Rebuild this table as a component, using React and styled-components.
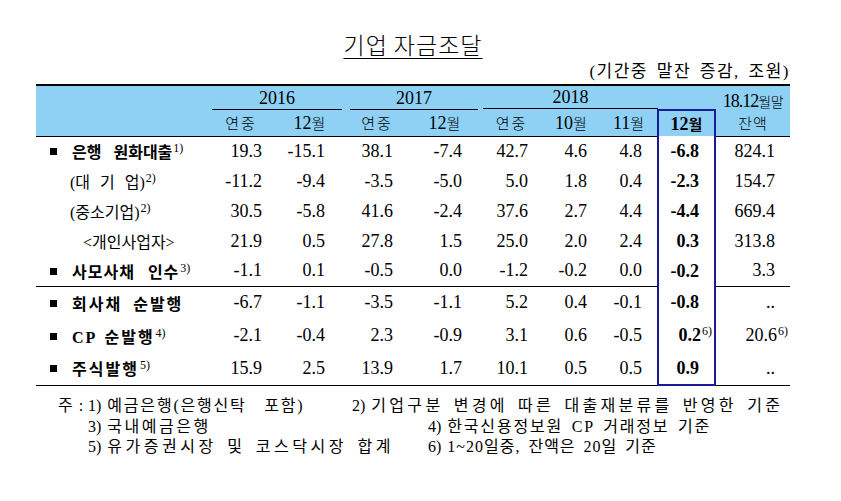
import React from 'react';
import styled, { createGlobalStyle } from 'styled-components';

const GlobalStyle = createGlobalStyle`
  html, body { margin: 0; padding: 0; background: #ffffff; }
  body {
    font-family: "Liberation Serif", "Noto Sans CJK KR", serif;
    color: #000000;
  }
`;

const BLUE = '#8fd0f5';
const NAVY = '#1b1b98';

const Page = styled.div`
  width: 841px;
  height: 501px;
  box-sizing: border-box;
  padding: 30px 0 0 36px;
  overflow: hidden;
`;

const Sheet = styled.div`
  width: 754px;
  display: flex;
  flex-direction: column;
`;

const Title = styled.h1`
  margin: 0;
  text-align: center;
  font-family: "Noto Sans CJK KR", sans-serif;
  font-size: 23px;
  line-height: 28px;
  font-weight: 300;
  letter-spacing: 1px;
`;

const TitleText = styled.span`
  text-decoration: underline;
  text-decoration-thickness: 1px;
  text-underline-offset: 4px;
`;

const Unit = styled.div`
  margin: 4px 0 2px;
  text-align: right;
  font-family: "Liberation Serif", "Noto Sans CJK KR", serif;
  font-size: 17px;
  line-height: 20px;
  letter-spacing: 1.5px;
  word-spacing: 3px;
`;

const Table = styled.table`
  width: 754px;
  border-collapse: collapse;
  table-layout: fixed;
  font-size: 18px;
`;

const HeadRow = styled.tr`
  height: ${p => p.$h}px;
`;

const HeadCell = styled.th`
  background: ${BLUE};
  padding: ${p => p.$padTop || 0}px 0 0;
  text-align: center;
  vertical-align: ${p => p.$valign || 'middle'};
  font-weight: ${p => (p.$bold ? 700 : 400)};
  line-height: 21px;
  border-top: ${p => (p.$top ? '2px solid #000' : p.$boxTop ? `2px solid ${NAVY}` : 'none')};
  border-bottom: ${p => (p.$bottom ? '1px solid #000' : 'none')};
  border-left: ${p => (p.$box ? `2px solid ${NAVY}` : 'none')};
  border-right: ${p => (p.$box ? `2px solid ${NAVY}` : 'none')};
`;

const YearLabel = styled.div`
  margin: 0 ${p => p.$mr}px 0 ${p => p.$ml}px;
  border-bottom: 1px solid #000;
  line-height: 22px;
  font-weight: 400;
`;

const BalanceLine = styled.div`
  letter-spacing: ${p => p.$ls}px;
  white-space: nowrap;
`;

const Ko = styled.span`
  font-family: "Noto Sans CJK KR", sans-serif;
  font-size: ${p => p.$size || 15}px;
  font-weight: ${p => (p.$bold ? 700 : 300)};
  letter-spacing: ${p => p.$ls || 0}px;
`;

const BodyRow = styled.tr`
  height: ${p => p.$h}px;
`;

const LabelCell = styled.td`
  padding: 0 0 0 ${p => p.$indent}px;
  white-space: nowrap;
  font-family: "Liberation Serif", "Noto Sans CJK KR", serif;
  font-size: 16px;
  font-weight: ${p => (p.$main ? 700 : 400)};
  letter-spacing: ${p => p.$ls}px;
  word-spacing: ${p => p.$ws}px;
  border-top: ${p => (p.$sepTop ? '1px solid #000' : 'none')};
  border-bottom: ${p => (p.$sepBottom ? '1px solid #000' : 'none')};
`;

const Bullet = styled.span`
  display: inline-block;
  width: 7px;
  height: 7px;
  background: #000;
  margin-right: 15px;
  vertical-align: 3px;
`;

const NumCell = styled.td`
  padding: 0 ${p => p.$pad}px 0 0;
  text-align: right;
  white-space: nowrap;
  font-weight: ${p => (p.$bold ? 700 : 400)};
  border-top: ${p => (p.$sepTop && !p.$box ? '1px solid #000' : 'none')};
  border-bottom: ${p => (p.$sepBottom ? (p.$box ? `2px solid ${NAVY}` : '1px solid #000') : 'none')};
  border-left: ${p => (p.$box ? `2px solid ${NAVY}` : 'none')};
  border-right: ${p => (p.$box ? `2px solid ${NAVY}` : 'none')};
`;

const Sup = styled.sup`
  font-family: "Liberation Serif", serif;
  font-size: 12px;
  font-weight: 400;
  line-height: 0;
  vertical-align: 6px;
  letter-spacing: 0;
  word-spacing: 0;
  margin-left: 1px;
  margin-right: ${p => (p.$hang ? -13 : 0)}px;
`;

const Notes = styled.div`
  margin-top: 10px;
  padding-left: 22px;
  display: flex;
  flex-direction: column;
  font-family: "Liberation Serif", "Noto Sans CJK KR", serif;
  font-size: 16px;
  line-height: 20.5px;
`;

const NoteRow = styled.div`
  display: flex;
  white-space: nowrap;
`;

const NoteLead = styled.span`
  width: 30px;
  flex: none;
  word-spacing: 2px;
`;

const NoteItem = styled.span`
  width: ${p => (p.$w ? `${p.$w}px` : 'auto')};
  flex: none;
  letter-spacing: ${p => p.$ls}px;
  word-spacing: ${p => p.$ws}px;
`;

const NoteNum = styled.span`
  letter-spacing: 0;
  margin-right: 6px;
`;

const colWidths = [173, 64, 73, 62, 73, 61, 58, 58, 57, 75];
const pads = [11, 21, 15, 19, 14, 13, 15, 15, 15];

const rows = [
  { label: '은행 원화대출', note: '1)', main: true, ls: 0, ws: 8, values: ['19.3', '-15.1', '38.1', '-7.4', '42.7', '4.6', '4.8', '-6.8', '824.1'] },
  { label: '(대 기 업)', note: '2)', indent: 34, ws: 6, values: ['-11.2', '-9.4', '-3.5', '-5.0', '5.0', '1.8', '0.4', '-2.3', '154.7'] },
  { label: '(중소기업)', note: '2)', indent: 34, values: ['30.5', '-5.8', '41.6', '-2.4', '37.6', '2.7', '4.4', '-4.4', '669.4'] },
  { label: '<개인사업자>', indent: 47, values: ['21.9', '0.5', '27.8', '1.5', '25.0', '2.0', '2.4', '0.3', '313.8'] },
  { label: '사모사채 인수', note: '3)', main: true, ls: 1, ws: 8, values: ['-1.1', '0.1', '-0.5', '0.0', '-1.2', '-0.2', '0.0', '-0.2', '3.3'] },
  { label: '회사채 순발행', main: true, ls: 2, ws: 5, sepTop: true, values: ['-6.7', '-1.1', '-3.5', '-1.1', '5.2', '0.4', '-0.1', '-0.8', '..'] },
  { label: 'CP 순발행', note: '4)', main: true, ls: 2, ws: 2, values: ['-2.1', '-0.4', '2.3', '-0.9', '3.1', '0.6', '-0.5', { v: '0.2', note: '6)' }, { v: '20.6', note: '6)' }] },
  { label: '주식발행', note: '5)', main: true, ls: 2, ws: 0, sepBottom: true, values: ['15.9', '2.5', '13.9', '1.7', '10.1', '0.5', '0.5', '0.9', '..'] },
];

const notes = [
  {
    lead: '주 :',
    left: { n: '1)', t: '예금은행(은행신탁\u00a0 포함)', w: 264, ls: 1.8 },
    right: { n: '2)', t: '기업구분 변경에 따른 대출재분류를 반영한 기준', ls: 3.3 },
  },
  {
    lead: '',
    left: { n: '3)', t: '국내예금은행', w: 340, ls: 2.5 },
    right: { n: '4)', t: '한국신용정보원 CP 거래정보 기준', ls: 1.8 },
  },
  {
    lead: '',
    left: { n: '5)', t: '유가증권시장 및 코스닥시장 합계', w: 340, ls: 3.5 },
    right: { n: '6)', t: '1~20일중, 잔액은 20일 기준', ls: 1 },
  },
];

function App() {
  return (
    <Page>
      <GlobalStyle />
      <Sheet>
        <Title>
          <TitleText>기업 자금조달</TitleText>
        </Title>
        <Unit>(기간중 말잔 증감, 조원)</Unit>
        <Table>
          <colgroup>
            {colWidths.map((w, i) => (
              <col key={i} style={{ width: w }} />
            ))}
          </colgroup>
          <thead>
            <HeadRow $h={24}>
              <HeadCell rowSpan={2} $top $bottom />
              <HeadCell colSpan={2} $top $valign="bottom">
                <YearLabel $ml={3} $mr={4}>2016</YearLabel>
              </HeadCell>
              <HeadCell colSpan={2} $top $valign="bottom">
                <YearLabel $ml={4} $mr={3}>2017</YearLabel>
              </HeadCell>
              <HeadCell colSpan={4} $top $valign="bottom">
                <YearLabel $ml={2} $mr={57}>2018</YearLabel>
              </HeadCell>
              <HeadCell rowSpan={2} $top $bottom $padTop={4}>
                <BalanceLine $ls={-1}>
                  18.12<Ko $size={14} $ls={-0.5}>월말</Ko>
                </BalanceLine>
                <BalanceLine $ls={0}>
                  <Ko $size={15} $ls={1}>잔액</Ko>
                </BalanceLine>
              </HeadCell>
            </HeadRow>
            <HeadRow $h={26}>
              <HeadCell $bottom><Ko $ls={2}>연중</Ko></HeadCell>
              <HeadCell $bottom>12<Ko>월</Ko></HeadCell>
              <HeadCell $bottom><Ko $ls={2}>연중</Ko></HeadCell>
              <HeadCell $bottom>12<Ko>월</Ko></HeadCell>
              <HeadCell $bottom><Ko $ls={2}>연중</Ko></HeadCell>
              <HeadCell $bottom>10<Ko>월</Ko></HeadCell>
              <HeadCell $bottom>11<Ko>월</Ko></HeadCell>
              <HeadCell $box $boxTop $bold>12<Ko $bold>월</Ko></HeadCell>
            </HeadRow>
          </thead>
          <tbody>
            {rows.map((r, ri) => (
              <BodyRow key={ri} $h={ri < 5 ? 30 : 33}>
                <LabelCell
                  $main={r.main}
                  $indent={r.main ? 14 : r.indent}
                  $ls={r.ls || 0}
                  $ws={r.ws || 0}
                  $sepTop={r.sepTop}
                  $sepBottom={r.sepBottom}
                >
                  {r.main && <Bullet />}
                  {r.label}
                  {r.note && <Sup>{r.note}</Sup>}
                </LabelCell>
                {r.values.map((val, ci) => {
                  const cell = typeof val === 'string' ? { v: val } : val;
                  return (
                    <NumCell
                      key={ci}
                      $pad={pads[ci]}
                      $bold={ci === 7}
                      $box={ci === 7}
                      $sepTop={r.sepTop}
                      $sepBottom={r.sepBottom}
                    >
                      {cell.v}
                      {cell.note && <Sup $hang>{cell.note}</Sup>}
                    </NumCell>
                  );
                })}
              </BodyRow>
            ))}
          </tbody>
        </Table>
        <Notes>
          {notes.map((n, i) => (
            <NoteRow key={i}>
              <NoteLead>{n.lead}</NoteLead>
              <NoteItem $w={n.left.w} $ls={n.left.ls} $ws={3}>
                <NoteNum>{n.left.n}</NoteNum>
                {n.left.t}
              </NoteItem>
              <NoteItem $ls={n.right.ls} $ws={3}>
                <NoteNum>{n.right.n}</NoteNum>
                {n.right.t}
              </NoteItem>
            </NoteRow>
          ))}
        </Notes>
      </Sheet>
    </Page>
  );
}

export default App;
